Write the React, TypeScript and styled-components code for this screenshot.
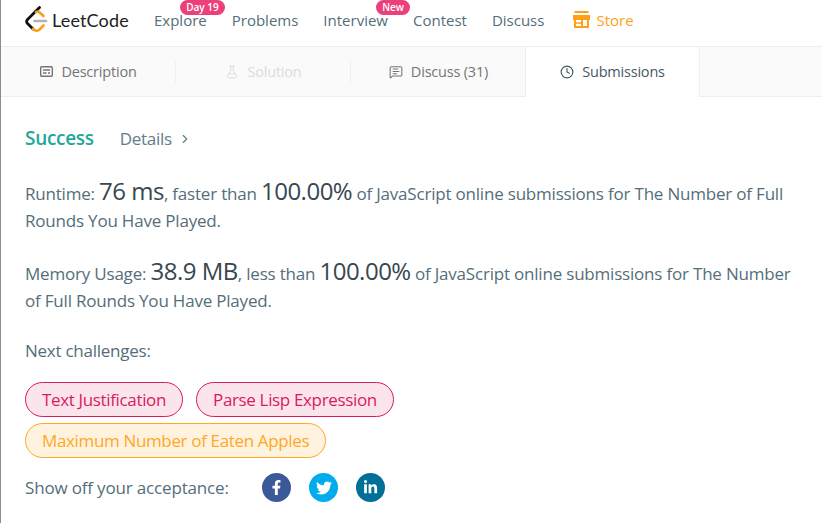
import styled, { createGlobalStyle } from 'styled-components'
import { Clock, FlaskConical, MessageSquareText, ChevronRight } from 'lucide-react'
import { FaFacebookF, FaTwitter, FaLinkedinIn } from 'react-icons/fa'

const GlobalStyle = createGlobalStyle`
    html, body {
        margin: 0;
        padding: 0;
        background: #fff;
    }
    body {
        font-family: 'Open Sans', 'Noto Sans', sans-serif;
        color: #546e7a;
        overflow: hidden;
    }
`

const Logo = () => (
    <svg width="23" height="27" viewBox="0 0 23 27" fill="none">
        <path d="M14.5 1.5 L2.5 13.5 Q0.8 15.5 2.5 17.5 L8 23" stroke="#111" strokeWidth="2.8" strokeLinecap="round" strokeLinejoin="round" />
        <path d="M11 6 L13.5 5.5 L18.5 10" stroke="#f89f1b" strokeWidth="2.6" strokeLinecap="round" strokeLinejoin="round" />
        <path d="M8 23 Q11 25.8 14 24 L18.5 19.5" stroke="#f89f1b" strokeWidth="2.6" strokeLinecap="round" strokeLinejoin="round" />
        <path d="M9.5 15 H21" stroke="#b3b3b3" strokeWidth="2.6" strokeLinecap="round" />
    </svg>
)

const StoreIcon = () => (
    <svg width="17" height="17" viewBox="0 0 17 17" fill="none" stroke="#ffa116" strokeWidth="2">
        <path d="M1.5 1 H15.5" />
        <path d="M1 5 H16 V8 H1 Z" fill="#ffa116" />
        <path d="M2 8 V16 H15 V8" />
        <path d="M9 9 V16" />
        <path d="M2 12 H9" strokeWidth="1.5" />
    </svg>
)

const DescriptionIcon = () => (
    <svg width="13" height="11" viewBox="0 0 13 11" fill="none" stroke="#757575" strokeWidth="1.4">
        <rect x="0.7" y="0.7" width="11.6" height="9.6" rx="1" />
        <path d="M3 4 H10 M3 7 H6.5 M8 7 H10" />
    </svg>
)

const App = () => {
    return (
        <Page>
            <GlobalStyle />
            <NavBar>
                <Brand>
                    <Logo />
                    <BrandName>LeetCode</BrandName>
                </Brand>
                <NavLinks>
                    <NavLink>
                        Explore
                        <NavBadge $right={-18}>Day 19</NavBadge>
                    </NavLink>
                    <NavLink>Problems</NavLink>
                    <NavLink>
                        Interview
                        <NavBadge $right={-22}>New</NavBadge>
                    </NavLink>
                    <NavLink>Contest</NavLink>
                    <NavLink>Discuss</NavLink>
                    <StoreLink>
                        <StoreIcon />
                        Store
                    </StoreLink>
                </NavLinks>
            </NavBar>
            <TabBar>
                <Tab>
                    <DescriptionIcon />
                    Description
                </Tab>
                <Tab $disabled>
                    <FlaskConical size={14} strokeWidth={1.6} />
                    Solution
                </Tab>
                <Tab>
                    <MessageSquareText size={14} strokeWidth={1.8} color="#757575" />
                    Discuss (31)
                </Tab>
                <Tab $active>
                    <Clock size={14} strokeWidth={2} />
                    Submissions
                </Tab>
            </TabBar>
            <Content>
                <ResultRow>
                    <Success>Success</Success>
                    <Details>
                        Details
                        <ChevronRight size={14} strokeWidth={2} />
                    </Details>
                </ResultRow>
                <Paragraph>
                    Runtime: <Big>76 ms</Big>, faster than <Big>100.00%</Big> of JavaScript online submissions for The Number of Full Rounds You Have Played.
                </Paragraph>
                <Paragraph>
                    Memory Usage: <Big>38.9 MB</Big>, less than <Big>100.00%</Big> of JavaScript online submissions for The Number of Full Rounds You Have Played.
                </Paragraph>
                <NextLabel>Next challenges:</NextLabel>
                <Challenges>
                    <Challenge $tone="hard">Text Justification</Challenge>
                    <Challenge $tone="hard">Parse Lisp Expression</Challenge>
                    <Challenge $tone="medium">Maximum Number of Eaten Apples</Challenge>
                </Challenges>
                <ShareRow>
                    <ShareLabel>Show off your acceptance:</ShareLabel>
                    <ShareIcons>
                        <ShareIcon $bg="#3b5998"><FaFacebookF size={15} /></ShareIcon>
                        <ShareIcon $bg="#00aced"><FaTwitter size={16} /></ShareIcon>
                        <ShareIcon $bg="#007099"><FaLinkedinIn size={15} /></ShareIcon>
                    </ShareIcons>
                </ShareRow>
            </Content>
        </Page>
    )
}

export default App

const Page = styled.div`
    width: 822px;
    height: 523px;
    box-sizing: border-box;
    border-left: 1px solid #8c8c8c;
    overflow: hidden;
`

const NavBar = styled.nav`
    height: 47px;
    box-sizing: border-box;
    display: flex;
    align-items: center;
    padding: 0 0 7px 24px;
    border-bottom: 1px solid #eeeeee;
`

const Brand = styled.div`
    display: flex;
    align-items: center;
    gap: 4px;
    width: 129px;
`

const BrandName = styled.span`
    font-family: 'Lato', sans-serif;
    font-size: 18px;
    color: #212121;
    letter-spacing: 0.15px;
`

const NavLinks = styled.div`
    display: flex;
    align-items: center;
    gap: 25px;
`

const NavLink = styled.a`
    position: relative;
    font-size: 15px;
    color: #546e7a;
`

const StoreLink = styled(NavLink)`
    display: flex;
    align-items: center;
    gap: 6px;
    margin-left: 4px;
    color: #ffa116;
`

const NavBadge = styled.span<{ $right: number }>`
    position: absolute;
    top: -10px;
    right: ${(props) => props.$right}px;
    height: 15px;
    padding: 0 6px;
    border-radius: 8px;
    background: #ec407a;
    color: #fff;
    font-size: 10px;
    font-weight: 600;
    line-height: 15px;
    white-space: nowrap;
`

const TabBar = styled.div`
    height: 50px;
    box-sizing: border-box;
    display: flex;
    background: #fafafa;
    border-bottom: 1px solid #eeeeee;
`

const Tab = styled.div<{ $active?: boolean; $disabled?: boolean }>`
    position: relative;
    width: 175px;
    box-sizing: border-box;
    height: ${(props) => (props.$active ? '50px' : '49px')};
    margin-left: ${(props) => (props.$active ? '-1px' : '0')};
    padding-bottom: ${(props) => (props.$active ? '1px' : '0')};
    display: flex;
    align-items: center;
    justify-content: center;
    gap: 8px;
    font-size: 14.5px;
    letter-spacing: -0.2px;
    background: ${(props) => (props.$active ? '#fff' : 'transparent')};
    color: ${(props) => {
        if (props.$active) return '#455a64'
        if (props.$disabled) return '#dcdcdc'
        return '#757575'
    }};
    border-left: ${(props) => (props.$active ? '1px solid #eeeeee' : 'none')};
    border-right: ${(props) => (props.$active ? '1px solid #eeeeee' : 'none')};

    &:nth-child(-n + 2)::after {
        content: '';
        position: absolute;
        right: 0;
        top: 15px;
        height: 20px;
        border-right: 1px solid #eeeeee;
    }
`

const Content = styled.main`
    padding: 28px 24px 0;
    display: flex;
    flex-direction: column;
    align-items: flex-start;
`

const ResultRow = styled.div`
    display: flex;
    align-items: baseline;
    gap: 26px;
    height: 29px;
`

const Success = styled.span`
    font-size: 19px;
    font-weight: 600;
    letter-spacing: -0.3px;
    color: #26a69a;
`

const Details = styled.span`
    display: flex;
    align-items: center;
    gap: 6px;
    font-size: 17px;
    letter-spacing: -0.3px;
    color: #607d8b;
`

const Paragraph = styled.p`
    margin: 23px 0 0;
    font-size: 17px;
    line-height: 27px;
    letter-spacing: -0.2px;
    color: #546e7a;
`

const Big = styled.span`
    font-size: 24px;
    line-height: 27px;
    letter-spacing: -0.5px;
    color: #37474f;
`

const NextLabel = styled.div`
    margin-top: 25px;
    font-size: 17px;
    letter-spacing: -0.25px;
    color: #546e7a;
`

const Challenges = styled.div`
    margin-top: 20px;
    width: 400px;
    display: flex;
    flex-wrap: wrap;
    gap: 6px 13px;
`

const Challenge = styled.a<{ $tone: 'hard' | 'medium' }>`
    height: 35px;
    box-sizing: border-box;
    display: flex;
    align-items: center;
    padding: 0 16px;
    border-radius: 18px;
    font-size: 17px;
    letter-spacing: -0.35px;
    border: 1px solid ${(props) => (props.$tone === 'hard' ? '#d81b60' : '#ffa726')};
    color: ${(props) => (props.$tone === 'hard' ? '#d81b60' : '#ffa726')};
    background: ${(props) => (props.$tone === 'hard' ? '#fce4ec' : '#fff3e0')};
`

const ShareRow = styled.div`
    margin-top: 15px;
    display: flex;
    align-items: center;
`

const ShareLabel = styled.span`
    width: 237px;
    font-size: 17px;
    letter-spacing: -0.17px;
    color: #546e7a;
`

const ShareIcons = styled.div`
    display: flex;
    gap: 18px;
`

const ShareIcon = styled.span<{ $bg: string }>`
    width: 29px;
    height: 29px;
    border-radius: 50%;
    display: flex;
    align-items: center;
    justify-content: center;
    color: #fff;
    background: ${(props) => props.$bg};
`
